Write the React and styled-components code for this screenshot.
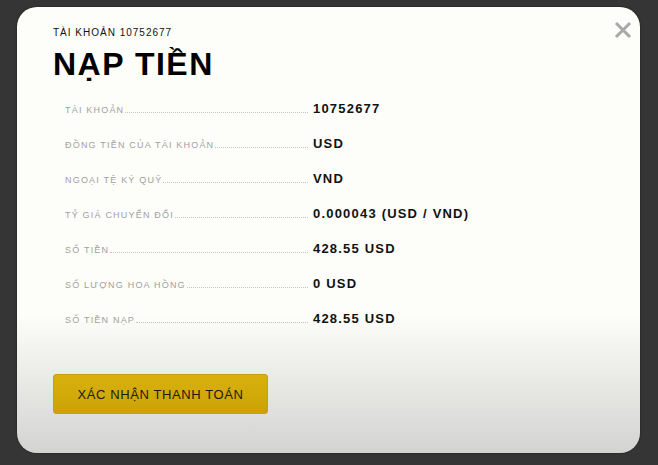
import React from "react";
import styled, { createGlobalStyle } from "styled-components";

const GlobalStyle = createGlobalStyle`
  html, body {
    margin: 0;
    padding: 0;
    background: #353535;
    font-family: "Liberation Sans", Arial, sans-serif;
  }
`;

const Page = styled.div`
  width: 658px;
  height: 465px;
  box-sizing: border-box;
  padding: 7px 18px 12px 17px;
  background: #353535;
`;

const Modal = styled.div`
  position: relative;
  width: 623px;
  height: 446px;
  box-sizing: border-box;
  padding: 19px 36px 0;
  border-radius: 20px;
  background: linear-gradient(
    to bottom,
    #fdfdfa 0%,
    #fdfdfa 69%,
    #d3d3d1 100%
  );
  box-shadow: 0 0 2px rgba(0, 0, 0, 0.5);
`;

const CloseBtn = styled.button`
  position: absolute;
  top: 13px;
  right: 7px;
  width: 20px;
  height: 20px;
  padding: 0;
  border: 0;
  background: none;
  cursor: pointer;
`;

const Account = styled.div`
  font-size: 10px;
  line-height: 13px;
  letter-spacing: 1px;
  color: #111;
`;

const Title = styled.h1`
  margin: 9px 0 0;
  font-size: 32px;
  line-height: 32px;
  font-weight: 700;
  letter-spacing: 1.5px;
  color: #000;
`;

const Rows = styled.div`
  margin-top: 11px;
  padding-left: 12px;
`;

const Row = styled.div`
  display: flex;
  align-items: baseline;
  height: 35px;
  line-height: 35px;
`;

const LabelCell = styled.div`
  display: flex;
  align-items: baseline;
  width: 243px;
  margin-right: 5px;
`;

const Label = styled.span`
  font-size: 9px;
  letter-spacing: 1.2px;
  color: #a0a0a0;
  white-space: nowrap;
`;

const Leader = styled.span`
  flex: 1;
  height: 0;
  margin-left: 1px;
  border-bottom: 1px dotted #c4c4c4;
`;

const Value = styled.span`
  font-size: 13px;
  font-weight: 700;
  letter-spacing: 1.2px;
  color: #111;
`;

const ConfirmBtn = styled.button`
  margin-top: 38px;
  width: 215px;
  height: 40px;
  border: 1px solid #c9a006;
  border-radius: 3px;
  background: linear-gradient(to bottom, #d8b10d, #cba207);
  font-family: "Liberation Sans", Arial, sans-serif;
  font-size: 13px;
  letter-spacing: 0.6px;
  color: #1e1a0c;
  cursor: pointer;
`;

const rows = [
  ["TÀI KHOẢN", "10752677"],
  ["ĐỒNG TIỀN CỦA TÀI KHOẢN", "USD"],
  ["NGOẠI TỆ KÝ QUỸ", "VND"],
  ["TỶ GIÁ CHUYỂN ĐỔI", "0.000043 (USD / VND)"],
  ["SỐ TIỀN", "428.55 USD"],
  ["SỐ LƯỢNG HOA HỒNG", "0 USD"],
  ["SỐ TIỀN NẠP", "428.55 USD"],
];

const App = () => {
  return (
    <Page>
      <GlobalStyle />
      <Modal>
        <CloseBtn aria-label="Đóng">
          <svg width="20" height="20" viewBox="0 0 20 20">
            <path
              d="M3 3 L17 17 M17 3 L3 17"
              stroke="#a8a8a8"
              strokeWidth="3"
              strokeLinecap="butt"
            />
          </svg>
        </CloseBtn>
        <Account>TÀI KHOẢN 10752677</Account>
        <Title>NẠP TIỀN</Title>
        <Rows>
          {rows.map(([label, value]) => (
            <Row key={label}>
              <LabelCell>
                <Label>{label}</Label>
                <Leader />
              </LabelCell>
              <Value>{value}</Value>
            </Row>
          ))}
        </Rows>
        <ConfirmBtn>XÁC NHẬN THANH TOÁN</ConfirmBtn>
      </Modal>
    </Page>
  );
};

export default App;
